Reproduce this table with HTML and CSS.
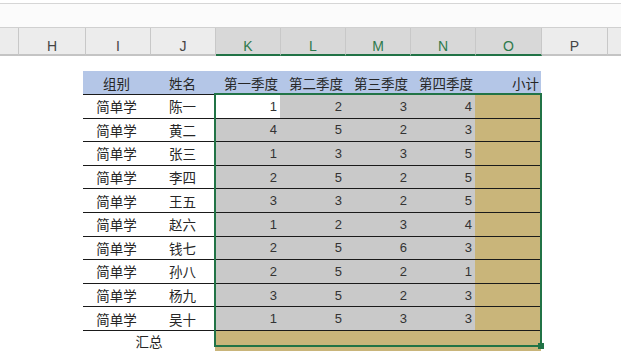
FILE: index.html
```html
<!DOCTYPE html>
<html lang="zh">
<head>
<meta charset="utf-8">
<title>Sheet</title>
<link rel="stylesheet" href="styles.css">
</head>
<body>
<div class="ribbon"></div>
<div class="colhead">
  <div class="ch"></div>
  <div class="ch">H</div>
  <div class="ch">I</div>
  <div class="ch">J</div>
  <div class="ch sel">K</div>
  <div class="ch sel">L</div>
  <div class="ch sel">M</div>
  <div class="ch sel">N</div>
  <div class="ch sel">O</div>
  <div class="ch">P</div>
  <div class="ch last"></div>
</div>
<div class="sheet">
  <div class="table">
    <div class="row head">
      <div class="c ctr">组别</div>
      <div class="c ctr">姓名</div>
      <div class="c r">第一季度</div>
      <div class="c r">第二季度</div>
      <div class="c r">第三季度</div>
      <div class="c r">第四季度</div>
      <div class="c r">小计</div>
    </div>
    <div class="row data"><div class="c ctr">简单学</div><div class="c ctr">陈一</div><div class="c n active">1</div><div class="c n">2</div><div class="c n">3</div><div class="c n">4</div><div class="c gold"></div></div>
    <div class="row data"><div class="c ctr">简单学</div><div class="c ctr">黄二</div><div class="c n">4</div><div class="c n">5</div><div class="c n">2</div><div class="c n">3</div><div class="c gold"></div></div>
    <div class="row data"><div class="c ctr">简单学</div><div class="c ctr">张三</div><div class="c n">1</div><div class="c n">3</div><div class="c n">3</div><div class="c n">5</div><div class="c gold"></div></div>
    <div class="row data"><div class="c ctr">简单学</div><div class="c ctr">李四</div><div class="c n">2</div><div class="c n">5</div><div class="c n">2</div><div class="c n">5</div><div class="c gold"></div></div>
    <div class="row data"><div class="c ctr">简单学</div><div class="c ctr">王五</div><div class="c n">3</div><div class="c n">3</div><div class="c n">2</div><div class="c n">5</div><div class="c gold"></div></div>
    <div class="row data"><div class="c ctr">简单学</div><div class="c ctr">赵六</div><div class="c n">1</div><div class="c n">2</div><div class="c n">3</div><div class="c n">4</div><div class="c gold"></div></div>
    <div class="row data"><div class="c ctr">简单学</div><div class="c ctr">钱七</div><div class="c n">2</div><div class="c n">5</div><div class="c n">6</div><div class="c n">3</div><div class="c gold"></div></div>
    <div class="row data"><div class="c ctr">简单学</div><div class="c ctr">孙八</div><div class="c n">2</div><div class="c n">5</div><div class="c n">2</div><div class="c n">1</div><div class="c gold"></div></div>
    <div class="row data"><div class="c ctr">简单学</div><div class="c ctr">杨九</div><div class="c n">3</div><div class="c n">5</div><div class="c n">2</div><div class="c n">3</div><div class="c gold"></div></div>
    <div class="row data"><div class="c ctr">简单学</div><div class="c ctr">吴十</div><div class="c n">1</div><div class="c n">5</div><div class="c n">3</div><div class="c n">3</div><div class="c gold"></div></div>
    <div class="row sum">
      <div class="c ctr span2">汇总</div>
      <div class="c gold span5"></div>
    </div>
    <div class="selection"><span class="handle"></span></div>
  </div>
</div>
</body>
</html>
```
FILE: styles.css
```css
* { box-sizing: border-box; }

body {
  margin: 0;
  width: 621px;
  height: 362px;
  overflow: hidden;
  background: #ffffff;
  font-family: "Liberation Sans", "Noto Sans CJK SC", sans-serif;
}

.ribbon {
  margin-top: 3px;
  height: 24px;
  border-top: 1px solid #d6d6d6;
  background: #fbfbfb;
}

.colhead {
  display: grid;
  grid-template-columns: 19px 67px 65px 65px 65px 65px 65px 65px 66px 66px 13px;
  height: 27px;
  border-top: 1px solid #d0d0d0;
  background: #ececec;
}

.ch {
  border-right: 1px solid #c8c8c8;
  border-bottom: 2px solid #c4c4c4;
  font-family: "Liberation Sans", sans-serif;
  font-size: 14px;
  line-height: 16px;
  padding-top: 10px;
  color: #454545;
  text-align: center;
}

.ch.sel {
  background: #d8d8d8;
  border-bottom-color: #217346;
  color: #2f7a4c;
}

.ch.last { border-right: none; }

.sheet {
  padding-top: 17px;
  padding-left: 83px;
}

.table {
  position: relative;
  width: 458px;
}

.row {
  display: grid;
  grid-template-columns: 67px 65px 65px 65px 65px 65px 66px;
}

.head {
  height: 23px;
  background: #b4c6e7;
}

.data {
  height: 23.6px;
  border-top: 1px solid #1a1a1a;
}

.sum {
  height: 17px;
  border-top: 1px solid #1a1a1a;
}

.c {
  display: flex;
  align-items: center;
  font-family: "Noto Sans CJK SC", sans-serif;
  font-size: 13.5px;
  color: #262626;
}

.ctr { justify-content: center; }

.r {
  justify-content: flex-end;
  padding-right: 2px;
}

.n {
  justify-content: flex-end;
  padding-right: 3px;
  font-family: "Liberation Sans", sans-serif;
  font-size: 13px;
  color: #333333;
  background: #c9c9c9;
}

.n.active { background: #ffffff; }

.gold { background: #c9b57a; }

.span2 { grid-column: span 2; }
.span5 { grid-column: span 5; }

.selection {
  position: absolute;
  left: 131px;
  top: 22px;
  width: 328px;
  height: 254px;
  border: 2px solid #217346;
  pointer-events: none;
}

.handle {
  position: absolute;
  right: -4px;
  bottom: -4px;
  width: 6px;
  height: 6px;
  background: #217346;
}
```
